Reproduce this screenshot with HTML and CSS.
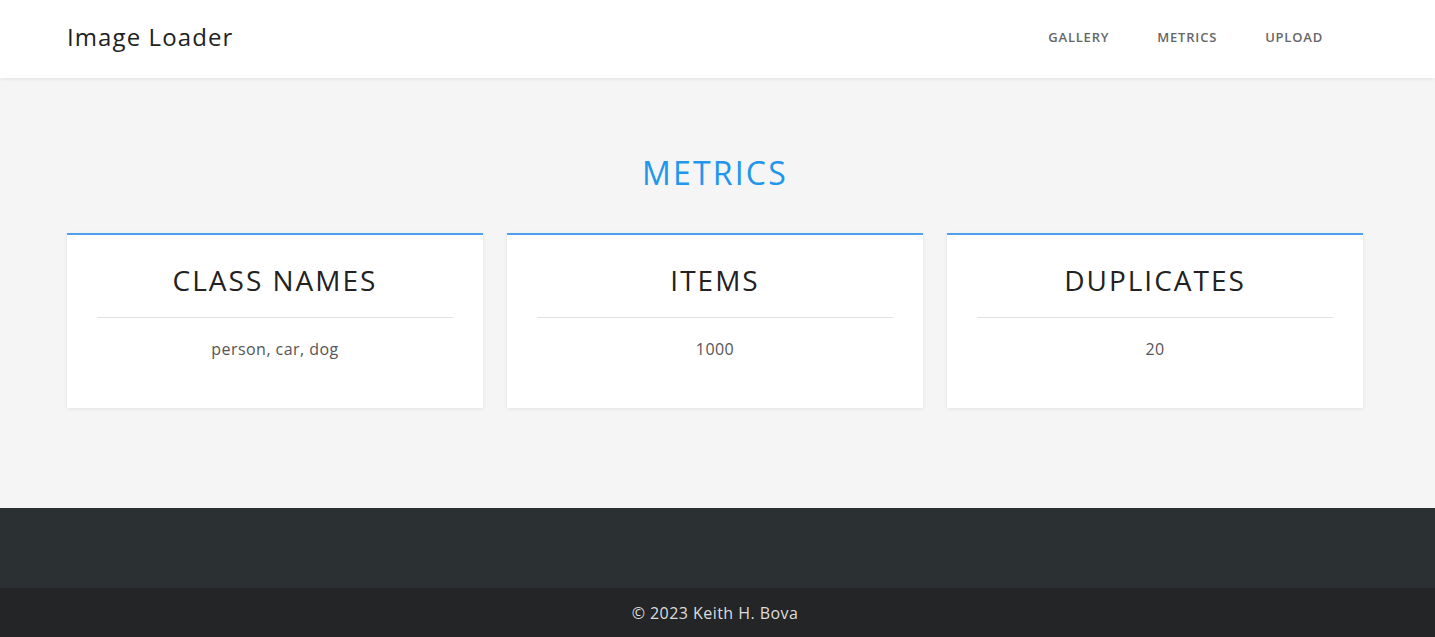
FILE: index.html
```html
<!DOCTYPE html>
<html lang="en">
<head>
<meta charset="utf-8">
<title>Image Loader - Metrics</title>
<link rel="stylesheet" href="styles.css">
</head>
<body>
<header class="topbar">
  <div class="container topbar-inner">
    <a class="brand" href="#">Image Loader</a>
    <nav class="nav">
      <a class="nav-link" href="#">GALLERY</a>
      <a class="nav-link" href="#">METRICS</a>
      <a class="nav-link" href="#">UPLOAD</a>
    </nav>
  </div>
</header>
<main class="main">
  <div class="container">
    <h1 class="page-title">METRICS</h1>
    <div class="cards">
      <section class="card">
        <h2 class="card-title">CLASS NAMES</h2>
        <hr class="card-rule">
        <p class="card-value">person, car, dog</p>
      </section>
      <section class="card">
        <h2 class="card-title">ITEMS</h2>
        <hr class="card-rule">
        <p class="card-value">1000</p>
      </section>
      <section class="card">
        <h2 class="card-title">DUPLICATES</h2>
        <hr class="card-rule">
        <p class="card-value">20</p>
      </section>
    </div>
  </div>
</main>
<footer class="footer">
  <div class="footer-top"></div>
  <div class="footer-bottom">
    <div class="container footer-text">© 2023 Keith H. Bova</div>
  </div>
</footer>
</body>
</html>
```
FILE: styles.css
```css
* { box-sizing: border-box; }
body {
  margin: 0;
  background: #f5f5f5;
  font-family: "Open Sans", "DejaVu Sans", sans-serif;
  color: #222;
}
.container {
  width: 1296px;
  margin-left: calc(50% - 650.5px);
}
.topbar {
  background: #fff;
  height: 78px;
  box-shadow: 0 1px 4px rgba(0,0,0,0.08);
  position: relative;
  z-index: 1;
}
.topbar-inner {
  height: 78px;
  display: flex;
  align-items: center;
  justify-content: space-between;
}
.brand {
  font-size: 24px;
  letter-spacing: 1.1px;
  color: #222;
  text-decoration: none;
  padding-bottom: 6px;
}
.nav {
  display: flex;
  padding-right: 16px;
  padding-bottom: 4px;
}
.nav-link {
  font-size: 13px;
  font-weight: 600;
  letter-spacing: 0.8px;
  color: #666;
  text-decoration: none;
  padding: 0 24px;
}
.main {
  padding: 76px 0 100px;
}
.page-title {
  margin: 0 0 41px;
  text-align: center;
  font-size: 32px;
  line-height: 38px;
  font-weight: 400;
  letter-spacing: 2.2px;
  color: #2196ea;
}
.cards {
  display: grid;
  grid-template-columns: repeat(3, 1fr);
  gap: 24px;
}
.card {
  background: #fff;
  border-top: 2px solid #4d9ff0;
  box-shadow: 0 1px 4px rgba(0,0,0,0.08);
  padding: 28px 30px 47px;
  text-align: center;
}
.card-title {
  margin: 0;
  font-size: 28px;
  line-height: 34px;
  font-weight: 400;
  letter-spacing: 2px;
  color: #222;
}
.card-rule {
  margin: 20px 0 19px;
  border: 0;
  border-top: 1px solid #e2e2e2;
}
.card-value {
  margin: 0;
  font-size: 16px;
  line-height: 24px;
  letter-spacing: 0.45px;
  color: #555;
}
.footer-top {
  height: 80px;
  background: #2b3033;
}
.footer-bottom {
  height: 49px;
  background: #232527;
  display: flex;
  align-items: center;
}
.footer-text {
  color: #ddd;
  font-size: 16px;
  letter-spacing: 0.45px;
  text-align: center;
}
```
